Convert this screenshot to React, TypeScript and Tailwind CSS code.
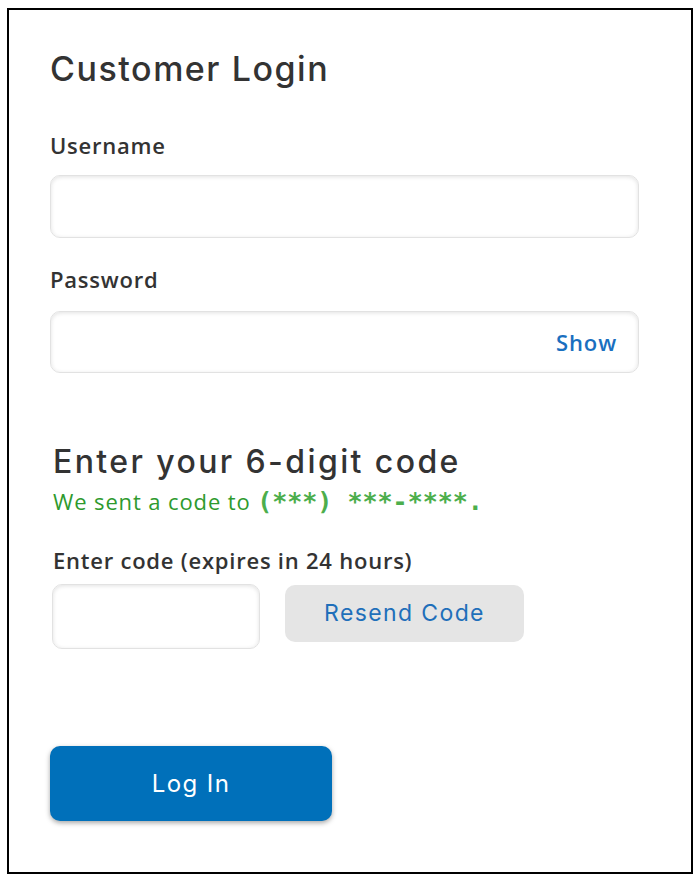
import React, { useState } from 'react';

const inputBase =
  'block rounded-[10px] border border-[#e2e2e2] bg-white shadow-[inset_0_1px_4px_rgba(0,0,0,0.12)] outline-none px-4 text-[20px] text-[#333] font-["Open_Sans","Noto_Sans",sans-serif]';

const labelClass =
  'block text-[22px] leading-[28px] font-semibold tracking-[0.035em] text-[#333] font-["Open_Sans","Noto_Sans",sans-serif]';

const App: React.FC = () => {
  const [username, setUsername] = useState('');
  const [password, setPassword] = useState('');
  const [code, setCode] = useState('');
  const [showPassword, setShowPassword] = useState(false);

  return (
    <div className="min-h-[884px] w-[700px] bg-white pt-[8px] pl-[7px]">
      <div className="flex flex-col items-start w-[686px] h-[866px] border-2 border-black pt-[39px] pl-[41px]">
        <h1 className="text-[34px] leading-[40px] font-medium text-[#333] tracking-[0.045em] font-[Inter,'Liberation_Sans',sans-serif]">
          Customer Login
        </h1>

        <div className="w-[589px] flex flex-col">
          <label className={labelClass + ' mt-[42px]'}>Username</label>
          <input
            type="text"
            value={username}
            onChange={(e) => setUsername(e.target.value)}
            className={inputBase + ' w-full mt-[16px] h-[63px]'}
          />

          <label className={labelClass + ' mt-[27px]'}>Password</label>
          <div className="relative mt-[18px]">
            <input
              type={showPassword ? 'text' : 'password'}
              value={password}
              onChange={(e) => setPassword(e.target.value)}
              className={inputBase + ' w-full h-[62px] pr-20'}
            />
            <button
              type="button"
              onClick={() => setShowPassword(!showPassword)}
              className="absolute right-[22px] top-1/2 -translate-y-1/2 text-[22px] font-semibold tracking-[0.04em] text-[#1a6fbf] font-['Open_Sans','Noto_Sans',sans-serif]"
            >
              Show
            </button>
          </div>
        </div>

        <div className="flex flex-col items-start pl-[3px]">
          <h2 className="mt-[70px] text-[32px] leading-[38px] font-medium text-[#333] tracking-[0.075em] font-[Inter,'Liberation_Sans',sans-serif]">
            Enter your 6-digit code
          </h2>
          <p className="mt-[6px] text-[22px] leading-[28px] tracking-[0.04em] text-[#2e9a2e] font-['Open_Sans','Noto_Sans',sans-serif]">
            We sent a code to{' '}
            <span className="font-bold tracking-normal text-[#4cae4c] text-[25px] font-['DejaVu_Sans_Mono','Liberation_Mono',monospace]">
              (***) ***-****.
            </span>
          </p>

          <label className={labelClass + ' mt-[30px]'}>Enter code (expires in 24 hours)</label>
          <div className="mt-[10px] flex items-start gap-[25px]">
            <input
              type="text"
              value={code}
              onChange={(e) => setCode(e.target.value)}
              className={inputBase + ' w-[208px] h-[65px] -ml-[1px]'}
            />
            <button
              type="button"
              className="mt-[1px] w-[239px] h-[57px] rounded-[10px] bg-[#e5e5e5] text-[23px] text-[#1f6fba] tracking-[0.06em] font-[Inter,'Liberation_Sans',sans-serif]"
            >
              Resend Code
            </button>
          </div>
        </div>

        <button
          type="button"
          className="mt-[97px] w-[282px] h-[75px] rounded-[10px] bg-[#0070ba] text-white text-[24px] tracking-[0.06em] shadow-[0_2px_5px_rgba(0,0,0,0.35)] font-[Inter,'Liberation_Sans',sans-serif]"
        >
          Log In
        </button>
      </div>
    </div>
  );
};

export default App;
